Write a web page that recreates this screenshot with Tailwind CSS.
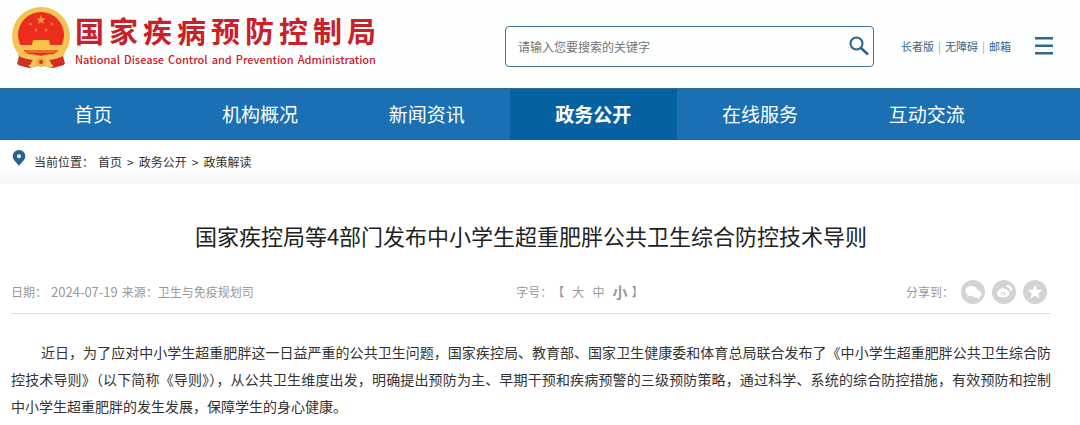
<!DOCTYPE html>
<html lang="zh-CN">
<head>
    <meta charset="UTF-8">
    <meta name="viewport" content="width=device-width, initial-scale=1.0">
    <title>国家疾病预防控制局</title>
    <script src="https://cdn.jsdelivr.net/npm/@tailwindcss/browser@4"></script>
</head>
<body class="bg-white font-['Noto_Sans_CJK_SC',sans-serif] text-xs text-[#333]">

    <!-- 顶部 -->
    <header class="flex items-center h-22 pl-[11px] pr-[27px] bg-[#fdfefe]">
        <a href="#" class="flex items-center gap-1 mb-3">
            <svg class="w-[60px] h-[62px] shrink-0" viewBox="0 0 60 62" aria-hidden="true">
                <path d="M9 44 L7 58 L18 61 L30 58 L42 61 L53 58 L51 44Z" fill="#cf2a1e"/>
                <circle cx="30" cy="29" r="29" fill="#f3c453"/>
                <circle cx="30" cy="28" r="23" fill="#ea2d1c"/>
                <path d="M30 8l1.200 3.400h3.600l-2.900 2.200 1.100 3.400-3-2.100-3 2.100 1.100-3.400-2.900-2.200h3.600z" fill="#f5a03c"/>
                <g fill="#f0703a">
                    <circle cx="19.500" cy="17" r="1.500"/>
                    <circle cx="41" cy="17" r="1.500"/>
                    <circle cx="25" cy="23" r="1.500"/>
                    <circle cx="35" cy="23" r="1.500"/>
                </g>
                <path d="M22 33h16l1 5h13l-3 5H11l-3-5h13z" fill="#f7c548"/>
                <path d="M13 43h34l-4 3H17z" fill="#ee6a2c"/>
                <path d="M8 43c7 6 14 3 22 6 8-3 15 0 22-6l1 6c-7 4-13 3-17 4l7 6-5 2-8-5-8 5-5-2 7-6c-4-1-10 0-17-4z" fill="#f3c45a"/>
                <path d="M8 49c5 3 9 3 14 4l-5 6-11-2zM52 49c-5 3-9 3-14 4l5 6 11-2z" fill="#d2301f"/>
                <circle cx="30" cy="55" r="5" fill="#efb03f"/>
                <circle cx="30" cy="55" r="2" fill="#d2301f"/>
            </svg>
            <span class="flex flex-col w-[301px] text-[#c9202a] [text-align-last:justify]">
                <span class="text-[29px] leading-[42px] font-bold">国家疾病预防控制局</span>
                <span class="text-[11px] leading-4 font-medium whitespace-nowrap">National Disease Control and Prevention Administration</span>
            </span>
        </a>

        <form class="flex items-center w-[369px] h-[41px] ml-[129px] mt-1 px-3 border border-[#3f7391] rounded-sm">
            <input type="text" id="keyword" name="keyword" aria-label="搜索关键字" placeholder="请输入您要搜索的关键字" class="flex-1 h-full text-xs placeholder:text-[#757575] focus:outline-none">
            <button type="submit" aria-label="搜索" class="-mr-2">
                <svg class="w-5 h-5" viewBox="0 0 20 20" fill="none" stroke="#27628c">
                    <circle cx="7.500" cy="7.500" r="6" stroke-width="2"/>
                    <path d="M12 12l7 6.500" stroke-width="2.500"/>
                </svg>
            </button>
        </form>

        <nav class="flex items-center gap-1 ml-auto mt-1 text-[11px] text-[#33678a]" aria-label="快捷">
            <a href="#">长者版</a>
            <span class="text-[#8aa9bd]">|</span>
            <a href="#">无障碍</a>
            <span class="text-[#8aa9bd]">|</span>
            <a href="#">邮箱</a>
        </nav>
        <button type="button" aria-label="菜单" class="ml-6 mt-1">
            <svg class="w-[18px] h-[18px]" viewBox="0 0 18 18" fill="#2c688f">
                <path d="M0 0h18v2.500H0zM0 7.500h18v2.500H0zM0 15h18v2.500H0z"/>
            </svg>
        </button>
    </header>

    <!-- 导航 -->
    <nav class="flex pl-[10px] pr-[70px] h-[52px] bg-[#1a70b2] border-t border-[#2a6d98] text-[19px] text-white text-center leading-[49px]" aria-label="主导航">
        <a href="#" class="flex-1">首页</a>
        <a href="#" class="flex-1">机构概况</a>
        <a href="#" class="flex-1">新闻资讯</a>
        <a href="#" class="flex-1 bg-[#0661a0] font-bold">政务公开</a>
        <a href="#" class="flex-1">在线服务</a>
        <a href="#" class="flex-1">互动交流</a>
    </nav>

    <!-- 当前位置 -->
    <div class="flex items-center h-11 px-3 bg-linear-to-b from-white from-60% to-[#f7f7f7]">
        <svg class="w-[14px] h-4 mb-2 mr-2" viewBox="0 0 13 16">
            <path d="M6.500 0A6.300 6.300 0 0 0 .2 6.300C.2 10 4.500 13 6.500 16 8.500 13 12.800 10 12.800 6.300A6.300 6.300 0 0 0 6.500 0z" fill="#26638f"/>
            <circle cx="6.500" cy="6.300" r="2" fill="#fff"/>
        </svg>
        <span>当前位置：</span>
        <a href="#" class="ml-1">首页</a>
        <span class="mx-[5px]">&gt;</span>
        <a href="#">政务公开</a>
        <span class="mx-[5px]">&gt;</span>
        <a href="#">政策解读</a>
    </div>

    <!-- 正文 -->
    <main class="pl-[11px] pr-6 pb-4 mr-1 border-r border-[#f6f6f6]">
        <h1 class="pt-[35px] pb-6 text-[22px] leading-8 text-center text-[#222]">国家疾控局等4部门发布中小学生超重肥胖公共卫生综合防控技术导则</h1>

        <div class="flex items-center justify-between h-[34px] mb-[25px] pb-1 pr-1 box-content border-b border-[#ddd] text-[#999]">
            <p class="flex items-center">日期：<time class="ml-1 text-[13px]">2024-07-19</time><span class="ml-1">来源：卫生与免疫规划司</span></p>
            <div class="flex items-center">
                <span>字号：</span>
                <span>【</span>
                <button type="button" class="ml-2">大</button>
                <button type="button" class="mx-2">中</button>
                <button type="button" class="text-[15px] font-bold">小</button>
                <span class="ml-1">】</span>
            </div>
            <div class="flex items-center gap-[7px]">
                <span>分享到：</span>
                <a href="#" aria-label="微信">
                    <svg class="w-6 h-6" viewBox="0 0 24 24">
                        <circle cx="12" cy="12" r="12" fill="#d3d3d3"/>
                        <path d="M10.500 6C7 6 4.500 8 4.500 10.800c0 1.600.9 2.900 2.200 3.800L6.200 17l2.600-1.400c.8.200 1.500.2 2.200.2 1 1.300 2.700 2 4.600 2l1.200-.1 2.200 1.300-.5-2c1.100-.8 1.800-1.900 1.800-3.100 0-2-1.700-3.700-4-4.100C15.700 7.500 13.400 6 10.500 6z" fill="#fff"/>
                    </svg>
                </a>
                <a href="#" aria-label="微博">
                    <svg class="w-6 h-6" viewBox="0 0 24 24">
                        <circle cx="12" cy="12" r="12" fill="#d3d3d3"/>
                        <path d="M10 8c1.500-.6 2.500 0 2.200 1.300 2-.7 3.800-.3 3.200 1.500 1.500.5 2 1.400 2 2.500 0 2.300-2.900 4.200-6.500 4.200S5 16 5 13.600C5 11.500 7.700 8.800 10 8z" fill="#fff"/>
                        <ellipse cx="11" cy="13.800" rx="2.600" ry="1.800" fill="#d3d3d3"/>
                        <circle cx="10.600" cy="13.900" r="1.200" fill="#fff"/>
                        <path d="M14.500 6.500c2.700-.7 5 1.500 4.300 4.500" fill="none" stroke="#fff" stroke-width="2"/>
                    </svg>
                </a>
                <a href="#" aria-label="收藏">
                    <svg class="w-6 h-6" viewBox="0 0 24 24">
                        <circle cx="12" cy="12" r="12" fill="#d3d3d3"/>
                        <path d="M12 5l2 4.700 5 .4-3.800 3.300 1.200 5-4.400-2.700-4.400 2.700 1.200-5L5 10.100l5-.4z" fill="#fff"/>
                    </svg>
                </a>
            </div>
        </div>

        <p class="text-sm leading-[27px] text-justify indent-[30px] text-[#333]">近日，为了应对中小学生超重肥胖这一日益严重的公共卫生问题，国家疾控局、教育部、国家卫生健康委和体育总局联合发布了《中小学生超重肥胖公共卫生综合防控技术导则》（以下简称《导则》），从公共卫生维度出发，明确提出预防为主、早期干预和疾病预警的三级预防策略，通过科学、系统的综合防控措施，有效预防和控制中小学生超重肥胖的发生发展，保障学生的身心健康。</p>
    </main>

</body>
</html>
